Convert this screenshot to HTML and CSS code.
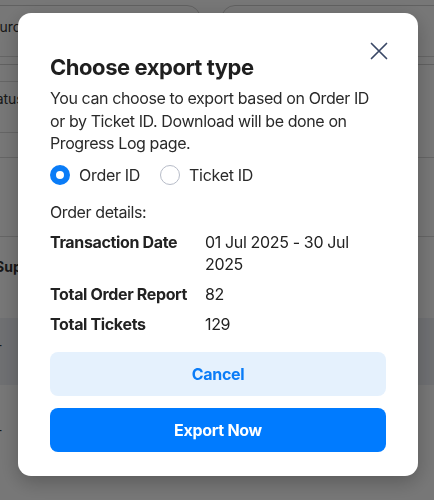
FILE: index.html
```html
<!DOCTYPE html>
<html>
<head>
<meta charset="utf-8">
<link rel="stylesheet" href="styles.css">
</head>
<body>
<div class="page">
  <div class="filters">
    <div class="field field-a"><span class="field-label">Source</span></div>
    <div class="field field-b"></div>
  </div>
  <div class="row row-1"><div class="cell"></div></div>
  <div class="row row-2"><div class="cell"><span class="row-label">Status</span></div></div>
  <div class="row row-3"></div>
  <div class="row row-3b"></div>
  <div class="row row-4"><span class="row-bold">Supplier</span></div>
  <div class="row row-5"><span class="dot">-</span></div>
  <div class="row row-6"><span class="dot">-</span></div>
</div>

<div class="overlay">
  <div class="modal">
    <button class="close" aria-label="Close">
      <svg width="18" height="18" viewBox="0 0 18 18"><path d="M1.5 1.5 L16.5 16.5 M16.5 1.5 L1.5 16.5" stroke="#3a4866" stroke-width="1.7" stroke-linecap="round" fill="none"/></svg>
    </button>
    <h2 class="title">Choose export type</h2>
    <p class="desc">You can choose to export based on Order ID or by Ticket ID. Download will be done on Progress Log page.</p>
    <div class="radios">
      <label class="radio"><span class="circle checked"></span><span>Order ID</span></label>
      <label class="radio"><span class="circle"></span><span>Ticket ID</span></label>
    </div>
    <div class="details-head">Order details:</div>
    <div class="details">
      <div class="dl">Transaction Date</div><div class="dv">01 Jul 2025 - 30 Jul 2025</div>
      <div class="dl">Total Order Report</div><div class="dv">82</div>
      <div class="dl">Total Tickets</div><div class="dv">129</div>
    </div>
    <div class="actions">
      <button class="btn btn-cancel">Cancel</button>
      <button class="btn btn-primary">Export Now</button>
    </div>
  </div>
</div>
</body>
</html>
```

FILE: styles.css
```css
* { box-sizing: border-box; }
html, body { margin: 0; padding: 0; }
body {
  width: 434px;
  height: 500px;
  overflow: hidden;
  font-family: "Inter", "Liberation Sans", sans-serif;
  color: #222;
  background: #fff;
}
.page { width: 434px; height: 500px; background: #fff; overflow: hidden; }
.filters { display: flex; gap: 20px; padding-top: 5px; margin-left: -30px; height: 57px; border-bottom: 1px solid #d9d9d9; }
.field { height: 60px; border: 1px solid #d0d0d0; border-radius: 14px; padding: 12px 10px; font-size: 14px; color: #333; }
.field-a { width: 231px; padding-left: 11px; }
.field-b { flex: 1; margin-right: -30px; }
.row { font-size: 14px; color: #333; }
.cell { width: 220px; height: 100%; border-bottom: 1px solid #d9d9d9; }
.row-1 { height: 25px; }
.row-2 { height: 51px; }
.row-2 .cell { padding-top: 8px; }
.row-2 .row-label { margin-left: -18px; }
.row-3 { height: 25px; border-bottom: 1px solid #d9d9d9; }
.row-3b { height: 79px; border-bottom: 1px solid #d9d9d9; }
.row-4 { height: 81px; padding-top: 21px; font-weight: 700; }
.row-4 .row-bold { margin-left: -5px; }
.row-5 { height: 67px; background: #eef0f5; padding-top: 18px; }
.row-6 { height: 100px; padding-top: 36px; }
.dot { margin-left: -4px; }

.overlay {
  position: fixed;
  inset: 0;
  background: rgba(0, 0, 0, 0.535);
  padding: 13px 16px 0 18px;
}
.modal {
  position: relative;
  width: 400px;
  background: #fff;
  border-radius: 13px;
  padding: 40px 32px 24px;
  box-shadow: 0 6px 20px rgba(0, 0, 0, 0.25);
}
.close {
  position: absolute;
  top: 23px;
  right: 24px;
  width: 30px;
  height: 30px;
  border: none;
  background: none;
  padding: 6px;
  cursor: pointer;
}
.title {
  margin: 0;
  font-size: 22px;
  line-height: 28px;
  font-weight: 700;
  color: #1f1f1f;
  letter-spacing: -0.45px;
}
.desc {
  margin: 6px 0 0;
  font-size: 16px;
  line-height: 22.5px;
  color: #2a2a2a;
  letter-spacing: -0.4px;
}
.radios { display: flex; gap: 20px; margin-top: 9px; align-items: center; letter-spacing: -0.3px; }
.radio { display: flex; align-items: center; gap: 9px; font-size: 16px; line-height: 22px; color: #2a2a2a; }
.circle {
  width: 20px; height: 20px; border-radius: 50%;
  border: 1px solid #b7bcc8; background: #fff;
  flex: none;
}
.circle.checked { border: 6px solid #0a7cf7; }
.details-head { margin-top: 15px; font-size: 16px; line-height: 22px; color: #2a2a2a; letter-spacing: -0.4px; }
.details {
  display: grid;
  grid-template-columns: 155px 1fr;
  row-gap: 8px;
  margin-top: 8px;
  font-size: 16px;
  line-height: 22px;
  color: #222;
  letter-spacing: -0.35px;
}
.dl { font-weight: 700; }
.dv { padding-right: 20px; }
.actions { display: flex; flex-direction: column; gap: 12px; margin-top: 17px; }
.btn {
  height: 44px;
  border: none;
  border-radius: 8px;
  font-family: inherit;
  font-size: 16px;
  font-weight: 700;
  letter-spacing: -0.3px;
}
.btn-cancel { background: #e5f1fd; color: #0a7cf7; }
.btn-primary { background: #007bff; color: #fff; }
```
